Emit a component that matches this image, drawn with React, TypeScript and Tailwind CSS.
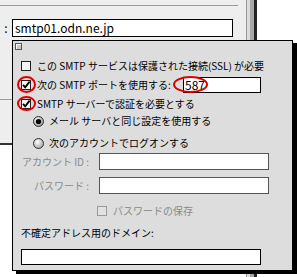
import React from 'react';

// Mac OS 9 style SMTP sheet, shown over the account window
const jp = "font-['Noto_Sans_CJK_JP',sans-serif]";

const CheckBox = ({ checked = false, disabled = false }: { checked?: boolean; disabled?: boolean }) => (
  <svg width="10" height="10" viewBox="0 0 10 10" className="shrink-0">
    <rect
      x="0.5"
      y="0.5"
      width="9"
      height="9"
      fill={disabled ? '#e2e2e2' : '#f4f4f4'}
      stroke={disabled ? '#9a9a9a' : '#222'}
    />
    {checked && <path d="M2 4.8l2.2 2.6L8.6 1.6" fill="none" stroke="#000" strokeWidth="1.8" />}
  </svg>
);

const Radio = ({ on = false }: { on?: boolean }) => (
  <svg width="11" height="11" viewBox="0 0 11 11" className="shrink-0">
    <defs>
      <radialGradient id={on ? 'ron' : 'roff'} cx="0.4" cy="0.35" r="0.7">
        <stop offset="0" stopColor="#ffffff" />
        <stop offset="1" stopColor={on ? '#8a8a8a' : '#a0a0a0'} />
      </radialGradient>
    </defs>
    <circle cx="5.5" cy="5.5" r="5" fill={`url(#${on ? 'ron' : 'roff'})`} stroke="#333" />
    {on && <circle cx="5.5" cy="5.5" r="2.6" fill="#000" />}
  </svg>
);

const Field = ({ w, h, dark = true, children }: { w: string; h: string; dark?: boolean; children?: React.ReactNode }) => (
  <div
    className={`${w} ${h} shrink-0 bg-white border ${dark ? 'border-black' : 'border-[#555]'} flex items-center pl-[1px] text-[12px] leading-none text-black`}
  >
    {children}
  </div>
);

export default function App() {
  return (
    <div className={`relative w-[297px] h-[277px] overflow-hidden bg-white flex ${jp}`}>
      {/* window behind the sheet */}
      <div className="w-[246px] flex flex-col">
        <div className="bg-[#eeeeee] flex flex-col">
          <div className="h-[5px]" />
          <div className="h-px w-[238px] bg-[#9a9a9a]" />
          <div className="mt-[13px] flex items-center h-[18px]">
            <span className="w-[12px] text-center text-[12px] leading-none">:</span>
            <div className="w-[221px] h-[18px] bg-white border border-black flex items-center pl-[2px] text-[12px] leading-none">
              smtp01.odn.ne.jp
            </div>
          </div>
          <div className="mt-[62px] h-px w-[12px] bg-[#9a9a9a]" />
          <div className="h-[43px]" />
        </div>
        <div className="h-[2px] w-[12px] bg-[#333]" />
      </div>
      <div className="w-px bg-[#9a9a9a]" />
      <div className="w-[3px] bg-[#dcdcdc]" />
      <div className="w-[4px] bg-[#a8a8a8]" />
      <div className="w-[3px] bg-[#222]" />
      <div className="flex-1 bg-white" />

      {/* SMTP options sheet */}
      <div className="absolute left-[12px] top-[40px] w-[281px] h-[231px] border border-black bg-[#dddddd] shadow-[4px_3px_0_#000] flex flex-col text-[10px] leading-none text-black">
        <div className="mt-[2px] ml-[2px] w-[7px] h-[7px] border border-[#555] bg-[#c8c8c8] shadow-[inset_1px_1px_0_#fff]" />

        <div className="mt-[8px] h-[16px] flex items-center pl-[8px] gap-[6px]">
          <CheckBox />
          <span>この SMTP サービスは保護された接続(SSL) が必要</span>
        </div>

        <div className="mt-[3px] h-[16px] flex items-center pl-[8px] gap-[6px]">
          <CheckBox checked />
          <span className="w-[140px]">次の SMTP ポートを使用する:</span>
          <Field w="w-[78px]" h="h-[16px]">587</Field>
        </div>

        <div className="mt-[3px] h-[16px] flex items-center pl-[8px] gap-[6px]">
          <CheckBox checked />
          <span>SMTP サーバーで認証を必要とする</span>
        </div>

        <div className="mt-[1px] h-[16px] flex items-center pl-[20px] gap-[5px]">
          <Radio on />
          <span>メール サーバと同じ設定を使用する</span>
        </div>

        <div className="mt-[6px] h-[16px] flex items-center pl-[20px] gap-[5px]">
          <Radio />
          <span>次のアカウントでログオンする</span>
        </div>

        <div className="mt-[2px] h-[17px] flex items-center">
          <span className="w-[76px] text-right text-[#8a8a8a]">アカウント ID :</span>
          <div className="ml-[10px]">
            <Field w="w-[170px]" h="h-[17px]" dark={false} />
          </div>
        </div>

        <div className="mt-[7px] h-[17px] flex items-center">
          <span className="w-[76px] text-right text-[#8a8a8a]">パスワード :</span>
          <div className="ml-[10px]">
            <Field w="w-[170px]" h="h-[17px]" dark={false} />
          </div>
        </div>

        <div className="mt-[9px] h-[16px] flex items-center pl-[84px] gap-[6px]">
          <CheckBox disabled />
          <span className="text-[#8a8a8a]">パスワードの保存</span>
        </div>

        <div className="mt-[6px] h-[16px] flex items-center pl-[8px]">
          <span>不確定アドレス用のドメイン:</span>
        </div>

        <div className="mt-[8px] pl-[8px]">
          <Field w="w-[240px]" h="h-[16px]" />
        </div>

        {/* red marks drawn on the screenshot */}
        <div className="absolute left-[4px] top-[35px] w-[19px] h-[17px] rounded-[50%] border-2 border-[#e00000]" />
        <div className="absolute left-[4px] top-[55px] w-[19px] h-[15px] rounded-[50%] border-2 border-[#e00000]" />
        <div className="absolute left-[160px] top-[35px] w-[35px] h-[17px] rounded-[50%] border-2 border-[#e00000]" />
      </div>
    </div>
  );
}
